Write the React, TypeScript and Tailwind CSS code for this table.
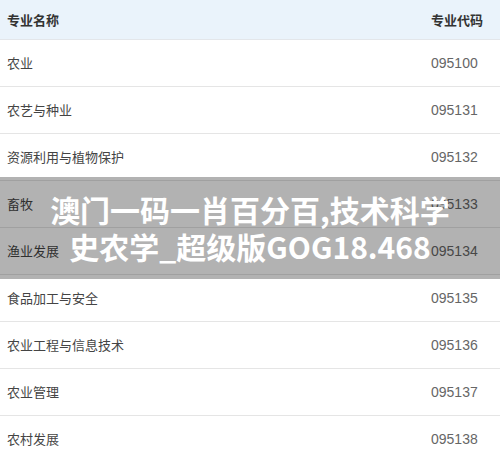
const rows = [
  ['农业', '095100'],
  ['农艺与种业', '095131'],
  ['资源利用与植物保护', '095132'],
  ['畜牧', '095133'],
  ['渔业发展', '095134'],
  ['食品加工与安全', '095135'],
  ['农业工程与信息技术', '095136'],
  ['农业管理', '095137'],
  ['农村发展', '095138'],
];

const font = { fontFamily: '"Noto Sans CJK SC", "Liberation Sans", sans-serif' };

export default function App() {
  return (
    <div className="relative w-[500px] h-[459px] overflow-hidden bg-white" style={font}>
      {/* Table */}
      <div className="flex h-[40px] items-center bg-[#eaf3fb] border-b border-[#e3e6ea] text-[13px] font-bold text-[#333]">
        <div className="flex-1 pl-[7px]">专业名称</div>
        <div className="w-[69px]">专业代码</div>
      </div>
      {rows.map(([name, code]) => (
        <div key={code} className="flex h-[47px] items-center border-b border-[#e5e5e5] text-[13px]">
          <div className="flex-1 pl-[7px] text-[#444]">{name}</div>
          <div className="w-[69px] text-[#666]" style={{ fontFamily: '"Liberation Sans", sans-serif', fontSize: 14 }}>
            {code}
          </div>
        </div>
      ))}

      {/* Overlay banner */}
      <div className="absolute left-0 right-0 top-[177px] h-[102px] bg-black/30 flex flex-col items-center justify-center">
        <div className="text-white font-bold text-[30px] leading-[37px] text-center">
          澳门一码一肖百分百,技术科学
          <br />
          史农学_超级版GOG18.468
        </div>
      </div>
    </div>
  );
}
